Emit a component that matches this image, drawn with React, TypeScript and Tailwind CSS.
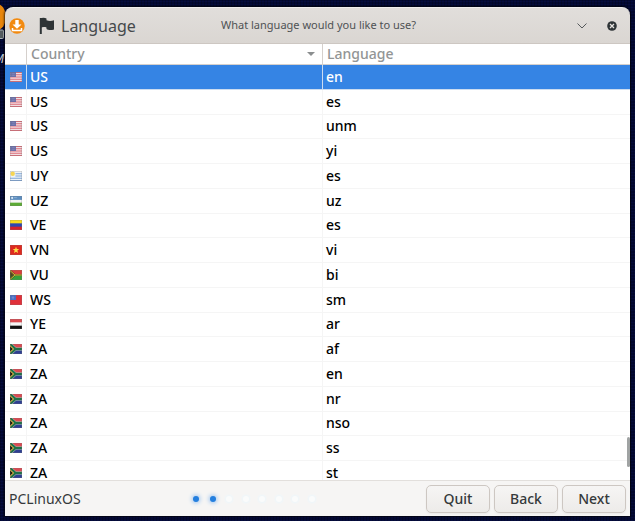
import type { ReactNode } from 'react';
import { useState } from 'react';

type Locale = { country: string; language: string };

const locales: Locale[] = [
  { country: 'US', language: 'en' },
  { country: 'US', language: 'es' },
  { country: 'US', language: 'unm' },
  { country: 'US', language: 'yi' },
  { country: 'UY', language: 'es' },
  { country: 'UZ', language: 'uz' },
  { country: 'VE', language: 'es' },
  { country: 'VN', language: 'vi' },
  { country: 'VU', language: 'bi' },
  { country: 'WS', language: 'sm' },
  { country: 'YE', language: 'ar' },
  { country: 'ZA', language: 'af' },
  { country: 'ZA', language: 'en' },
  { country: 'ZA', language: 'nr' },
  { country: 'ZA', language: 'nso' },
  { country: 'ZA', language: 'ss' },
  { country: 'ZA', language: 'st' },
];

const steps = [1, 2, 3, 4, 5, 6, 7, 8];
const currentStep = 2;

// every flag is drawn on a 22 x 18 field
const flags: Record<string, ReactNode> = {
  US: (
    <>
      <rect width="22" height="18" fill="#f3e6ea" />
      <path d="M0 5h22M0 9h22M0 13h22M0 17h22" stroke="#dc6470" strokeWidth="1.8" />
      <path d="M0 1h22" stroke="#dc6470" strokeWidth="1.8" />
      <rect width="11" height="9" fill="#6a6ea8" />
      <path d="M1 3h9M1 6h9" stroke="#b9bddb" strokeWidth="1" strokeDasharray="1 1.5" />
    </>
  ),
  UY: (
    <>
      <rect width="22" height="18" fill="#eef3f8" />
      <path d="M10 5h12M10 9h12M0 13h22M0 17h22" stroke="#7ea6d8" strokeWidth="2" />
      <circle cx="5" cy="5" r="4" fill="#f6d553" />
    </>
  ),
  UZ: (
    <>
      <rect width="22" height="18" fill="#f4f4f4" />
      <rect width="22" height="7" fill="#5b8dc0" />
      <rect y="12" width="22" height="6" fill="#5cab35" />
      <circle cx="4" cy="3.5" r="2" fill="#dbe8f4" />
      <path d="M8 3h6" stroke="#c5d9ec" strokeWidth="1.5" strokeDasharray="1 1" />
    </>
  ),
  VE: (
    <>
      <rect width="22" height="18" fill="#2d48b0" />
      <rect width="22" height="6" fill="#f8dc1c" />
      <rect y="12" width="22" height="6" fill="#d3222c" />
    </>
  ),
  VN: (
    <>
      <rect width="22" height="18" fill="#df2a1f" />
      <path d="M11 3l1.6 4.3h4.4l-3.5 2.8 1.3 4.4L11 12l-3.8 2.5 1.3-4.4L5 7.300h4.400z" fill="#fbe04a" />
    </>
  ),
  VU: (
    <>
      <rect width="22" height="9" fill="#d8403c" />
      <rect y="9" width="22" height="9" fill="#37a03a" />
      <path d="M0 1l9 8h13M9 9L0 17" stroke="#3a3418" strokeWidth="3" fill="none" />
      <path d="M0 1l9 8h13M9 9L0 17" stroke="#e5d040" strokeWidth="1.8" fill="none" />
      <path d="M0 3l6 6-6 6z" fill="#4a4820" />
    </>
  ),
  WS: (
    <>
      <rect width="22" height="18" fill="#e0303a" />
      <rect width="11" height="9" fill="#4a6fc4" />
      <path d="M5.500 2v6M3 5h5" stroke="#8fa0d6" strokeWidth="1" />
    </>
  ),
  YE: (
    <>
      <rect width="22" height="18" fill="#f6f6f6" />
      <rect width="22" height="6" fill="#dc4a50" />
      <rect y="12" width="22" height="6" fill="#111" />
    </>
  ),
  ZA: (
    <>
      <rect width="22" height="9" fill="#dd4a52" />
      <rect y="9" width="22" height="9" fill="#2f3f92" />
      <path d="M0 0l10 9h12M10 9L0 18" stroke="#ddd" strokeWidth="5.500" fill="none" />
      <path d="M0 0l10 9h12M10 9L0 18" stroke="#1f7048" strokeWidth="4.5" fill="none" />
      <path d="M0 2l7.500 7L0 16z" fill="#d8b040" />
      <path d="M0 4.500L5 9l-5 4.500z" fill="#111" />
    </>
  ),
};

const Flag = ({ code }: { code: string }) => (
  <svg viewBox="0 0 22 18" preserveAspectRatio="none" className="mx-auto block h-2.5 w-3" aria-hidden="true">
    {flags[code]}
    <rect x="0.500" y="0.500" width="21" height="17" fill="none" stroke="#777" strokeOpacity="0.4" />
  </svg>
);

const TitleBar = () => (
  <header className="flex h-[37px] shrink-0 items-center rounded-t-lg border-b border-[#cdc7c2] border-t border-t-[#f0eeec] bg-linear-to-b from-[#e1dedb] to-[#dad6d2] pr-2 pl-1">
    <div className="flex w-52 items-center">
      <svg viewBox="0 0 16 16" className="size-4" aria-hidden="true">
        <circle cx="8" cy="8" r="7.700" fill="#f28a10" />
        <path d="M6.300 2h3.400v4.500h2.800L8 10.800 3.500 6.500h2.800z" fill="#fff" />
        <path d="M3.500 10v2.400h9V10" fill="none" stroke="#fff" strokeWidth="1.500" />
      </svg>
      <svg viewBox="0 0 16 18" className="ml-[14px] h-[18px] w-4" aria-hidden="true">
        <path d="M1.800 1v16" stroke="#2e3436" strokeWidth="2" />
        <path d="M1 1.500c2-1 5-1 6.500 0v1.700c2.500 1 5 .800 7.500 0v9.300c-2.500.800-6 .800-7.500-.500v-1.500c-2-.800-4.500-.500-6.500.500z" fill="#2e3436" />
      </svg>
      <h1 className="ml-1.5 text-base text-[#45494b]">Language</h1>
    </div>
    <p className="grow pl-1 text-[11px] text-[#4f5254]">What language would you like to use?</p>
    <button type="button" aria-label="Minimize" className="flex size-5 items-center justify-center">
      <svg viewBox="0 0 10 6" className="h-1.5 w-2.5">
        <path d="M.500.500L5 5 9.500.500" fill="none" stroke="#55595b" />
      </svg>
    </button>
    <button type="button" aria-label="Close" className="ml-2.5 flex size-5 items-center justify-center">
      <svg viewBox="0 0 10 10" className="size-2.5">
        <circle cx="5" cy="5" r="4.800" fill="#2e3436" />
        <path d="M3 3l4 4M7 3L3 7" stroke="#e6e3e0" strokeWidth="1.300" />
      </svg>
    </button>
  </header>
);

const LocaleTable = () => {
  const [selected, setSelected] = useState(0);

  return (
    <div className="relative min-h-0 grow overflow-hidden bg-white">
      <table className="h-[442px] w-full table-fixed border-separate border-spacing-0 text-left text-sm leading-5 text-black">
        <colgroup>
          <col className="w-[22px]" />
          <col className="w-[296px]" />
          <col />
        </colgroup>
        <thead>
          <tr className="h-[21px] text-[#929595]">
            <th className="border-r border-b border-[#d5d0cc] p-0" aria-label="Flag" />
            <th className="border-r border-b border-[#d5d0cc] p-0 font-medium">
              <div className="flex items-center justify-between pr-[7px] pl-1">
                Country
                <svg viewBox="0 0 8 4" className="h-1 w-2" aria-hidden="true">
                  <path d="M0 0h8L4 4z" fill="#8b8e8f" />
                </svg>
              </div>
            </th>
            <th className="border-b border-[#d5d0cc] p-0 pl-1 font-medium">Language</th>
          </tr>
        </thead>
        <tbody>
          {locales.map((locale, i) => (
            <tr
              key={i}
              onClick={() => setSelected(i)}
              className={i === selected ? 'bg-[#3584e4] font-medium text-white' : 'font-medium'}
            >
              <td className="border-r border-b border-[#f2f2f2]/80 p-0">
                <Flag code={locale.country} />
              </td>
              <td className="border-r border-b border-[#f2f2f2]/80 p-0 pl-[3px]">{locale.country}</td>
              <td className="border-b border-[#f2f2f2]/80 p-0 pl-[3px]">{locale.language}</td>
            </tr>
          ))}
        </tbody>
      </table>
      <div className="absolute right-0 bottom-[13px] h-[30px] w-[3px] rounded-full bg-[#a0a3a3]" />
    </div>
  );
};

const buttonStyle =
  'h-7 w-16 rounded-[5px] border border-[#cdc7c2] bg-linear-to-b from-[#f6f5f4] to-[#edebe9] text-sm font-medium text-[#35393b] shadow-xs';

const Footer = () => (
  <footer className="flex h-9 shrink-0 items-center border-t border-[#e2dfdc] bg-[#f6f5f4] px-1">
    <span className="w-[184px] text-sm text-[#35393b]">PCLinuxOS</span>
    <div className="flex w-[122px] justify-between">
      {steps.map(step => (
        <span
          key={step}
          className={
            step <= currentStep
              ? 'size-1.5 rounded-full bg-[#247fdf] shadow-[0_0_4px_1px_#9cc4f0]'
              : 'size-1.5 rounded-full bg-[#fafbfb] shadow-[0_0_2px_1px_#eef7fb]'
          }
        />
      ))}
    </div>
    <div className="ml-auto flex gap-1">
      <button type="button" className={buttonStyle}>Quit</button>
      <button type="button" className={buttonStyle}>Back</button>
      <button type="button" className={buttonStyle}>Next</button>
    </div>
  </footer>
);

const App = () => (
  <div className="relative flex h-screen flex-col overflow-hidden bg-[#020832] bg-[repeating-linear-gradient(90deg,#00000033_0_1px,transparent_1px_3px),repeating-linear-gradient(0deg,#10186040_0_1px,transparent_1px_3px)] px-[5px] pt-[7px] pb-[5px] font-['Noto_Sans',sans-serif]">
    {/* desktop launcher peeking out from behind the window */}
    <svg viewBox="0 0 12 36" className="absolute top-1 left-0 h-9 w-3" aria-hidden="true">
      <ellipse cx="-3" cy="13" rx="9" ry="13" fill="#e8860c" />
      <rect x="-4" y="26" width="7.500" height="8.500" rx="1" fill="#555c60" stroke="#aeb4b8" />
    </svg>
    <span className="absolute top-[51px] -left-1.5 text-xs text-[#d8d8d8] italic">M</span>
    <main className="relative flex min-h-0 grow flex-col rounded-t-lg shadow-[0_0_2px_1px_#000a]">
      <TitleBar />
      <LocaleTable />
      <Footer />
    </main>
  </div>
);

export default App;
